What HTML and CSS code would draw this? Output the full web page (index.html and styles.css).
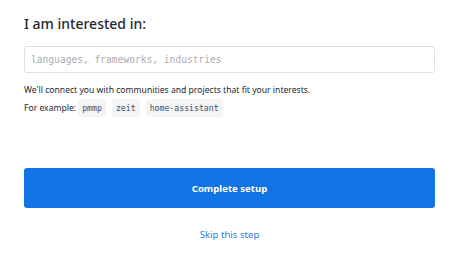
FILE: index.html
```html
<html lang="en">
<head>
  <meta charset="UTF-8">
  <title>Interests</title>
  <link rel="stylesheet" href="styles.css">
</head>
<body>
  <div class="setup">
    <h2 class="title">I am interested in:</h2>
    <input class="topics" type="text" placeholder="languages, frameworks, industries">
    <p class="note">We'll connect you with communities and projects that fit your interests.</p>
    <div class="examples">
      <span>For example:</span>
      <code>pmmp</code>
      <code>zeit</code>
      <code>home-assistant</code>
    </div>
    <button class="complete" type="button">Complete setup</button>
    <a href="#" class="skip">Skip this step</a>
  </div>
</body>
</html>
```

FILE: styles.css
```css
body {
  margin: 0;
  font-family: "Noto Sans", sans-serif;
  color: #24292e;
  background: white;
}
.setup {
  padding: 12px 34px 0 24px;
  display: flex;
  flex-direction: column;
}
.title {
  margin: 0;
  font-size: 14px;
  font-weight: 500;
  line-height: 24px;
}
.topics {
  margin-top: 10px;
  height: 27px;
  padding: 0 6px;
  border: 1px solid #dcdfe3;
  border-radius: 3px;
  font-family: "DejaVu Sans Mono", monospace;
  font-size: 9.6px;
  box-sizing: border-box;
}
.topics::placeholder {
  color: #a9adb2;
}
.note {
  margin: 10px 0 0;
  font-size: 8.6px;
  line-height: 14px;
}
.examples {
  margin-top: 2px;
  display: flex;
  align-items: center;
  font-size: 8.6px;
  line-height: 18px;
}
.examples code {
  background: #f3f4f6;
  color: #444d56;
  padding: 0 4px;
  margin-left: 6px;
  border-radius: 3px;
  font-family: "DejaVu Sans Mono", monospace;
  font-size: 8.2px;
  line-height: 18px;
}
.examples span + code {
  margin-left: 2px;
}
.complete {
  margin-top: 51px;
  height: 40px;
  border: 0;
  border-radius: 3px;
  background: #1274e4;
  color: white;
  font-family: "Noto Sans", sans-serif;
  font-weight: bold;
  font-size: 9.6px;
}
.skip {
  margin-top: 20px;
  align-self: center;
  color: #2f7fe0;
  font-size: 9.6px;
  line-height: 14px;
  text-decoration: none;
}
```
